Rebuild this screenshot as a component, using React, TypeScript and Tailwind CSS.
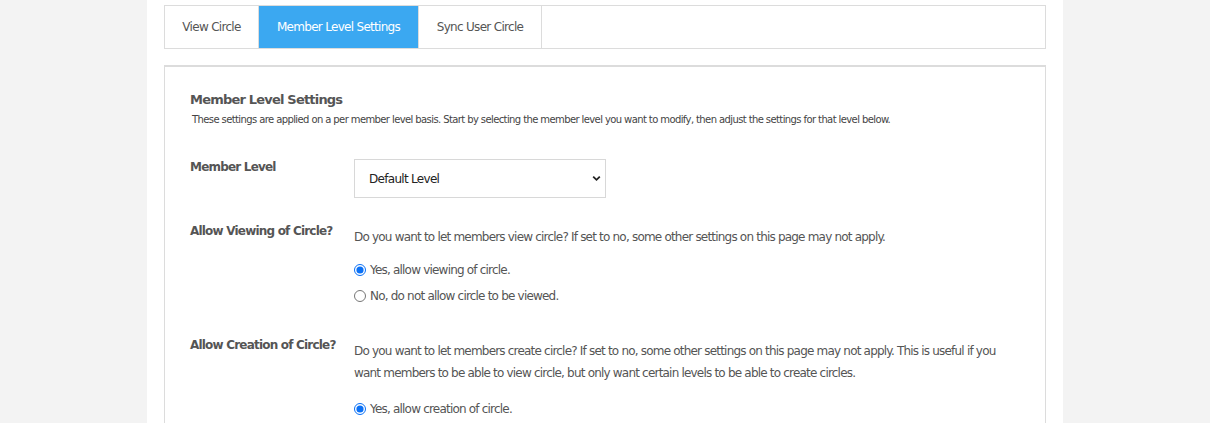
import { useState } from 'react';

const font = { fontFamily: '"DejaVu Sans", Verdana, sans-serif' };

const App = () => {
  const [tab, setTab] = useState(1);
  const [viewing, setViewing] = useState('yes');
  const [creation, setCreation] = useState('yes');
  const tabs = ['View Circle', 'Member Level Settings', 'Sync User Circle'];

  return (
    <div className="h-[423px] overflow-hidden bg-[#f3f3f3] text-[#555]" style={font}>
      <div className="mx-auto w-[916px] h-[423px] bg-white pl-[17px] pr-[17px] pt-[5px]">
        {/* Tabs */}
        <div className="flex h-[44px] border border-[#dcdcdc]">
          {tabs.map((t, i) => (
            <button
              key={t}
              onClick={() => setTab(i)}
              className={
                'h-full border-r border-[#dcdcdc] text-[12px] tracking-[-0.7px] ' +
                (i === 0 ? 'w-[94px] ' : i === 1 ? 'w-[160px] ' : 'w-[123px] ') +
                (tab === i ? 'bg-[#3ba8f1] text-white' : 'bg-white text-[#555]')
              }
            >
              {t}
            </button>
          ))}
        </div>

        {/* Settings panel */}
        <div className="mt-[16px] border border-[#dcdcdc] border-t-2 px-[25px] pt-[25px] pb-10">
          <h3 className="text-[13px] leading-[16px] font-bold text-[#555] tracking-[-0.8px]">Member Level Settings</h3>
          <p className="mt-[6px] ml-[2px] text-[10px] leading-[12px] text-[#444] tracking-[-0.6px]">
            These settings are applied on a per member level basis. Start by selecting the member level you want to modify, then adjust the settings for that level below.
          </p>

          {/* Member Level */}
          <div className="mt-[33px] flex">
            <label className="w-[164px] shrink-0 text-[12px] leading-[16px] font-bold text-[#555] tracking-[-0.8px]">Member Level</label>
            <div className="relative w-[252px] h-[39px]">
              <select className="w-full h-full appearance-none border border-[#d8d8d8] bg-white pl-[14px] text-[12px] text-[#222] tracking-[-0.7px] outline-none" style={font}>
                <option>Default Level</option>
                <option>Moderator</option>
                <option>Public</option>
              </select>
              <svg className="pointer-events-none absolute right-[5px] top-[16px]" width="9" height="7" viewBox="0 0 9 7">
                <path d="M1.2 1.6 L4.5 4.8 L7.8 1.6" fill="none" stroke="#222" strokeWidth="1.8" />
              </svg>
            </div>
          </div>

          {/* Allow Viewing */}
          <div className="mt-[25px] flex">
            <label className="w-[164px] shrink-0 text-[12px] leading-[16px] font-bold text-[#555] tracking-[-0.8px]">Allow Viewing of Circle?</label>
            <div className="mt-[3px] text-[12px] leading-[22px] tracking-[-0.8px]">
              <p>Do you want to let members view circle? If set to no, some other settings on this page may not apply.</p>
              <div className="mt-[9px]">
                <label className="flex h-[26px] items-center gap-[4px]">
                  <input type="radio" name="view" checked={viewing === 'yes'} onChange={() => setViewing('yes')} className="m-0 h-[12px] w-[12px] accent-[#0a70f5]" />
                  Yes, allow viewing of circle.
                </label>
                <label className="flex h-[26px] items-center gap-[4px]">
                  <input type="radio" name="view" checked={viewing === 'no'} onChange={() => setViewing('no')} className="m-0 h-[12px] w-[12px] accent-[#0a70f5]" />
                  No, do not allow circle to be viewed.
                </label>
              </div>
            </div>
          </div>

          {/* Allow Creation */}
          <div className="mt-[28px] flex">
            <label className="w-[164px] shrink-0 text-[12px] leading-[16px] font-bold text-[#555] tracking-[-0.8px]">Allow Creation of Circle?</label>
            <div className="mt-[3px] w-[670px] text-[12px] leading-[22px] tracking-[-0.8px]">
              <p>Do you want to let members create circle? If set to no, some other settings on this page may not apply. This is useful if you want members to be able to view circle, but only want certain levels to be able to create circles.</p>
              <div className="mt-[12px]">
                <label className="flex h-[26px] items-center gap-[4px]">
                  <input type="radio" name="create" checked={creation === 'yes'} onChange={() => setCreation('yes')} className="m-0 h-[12px] w-[12px] accent-[#0a70f5]" />
                  Yes, allow creation of circle.
                </label>
              </div>
            </div>
          </div>
        </div>
      </div>
    </div>
  );
};

export default App;
